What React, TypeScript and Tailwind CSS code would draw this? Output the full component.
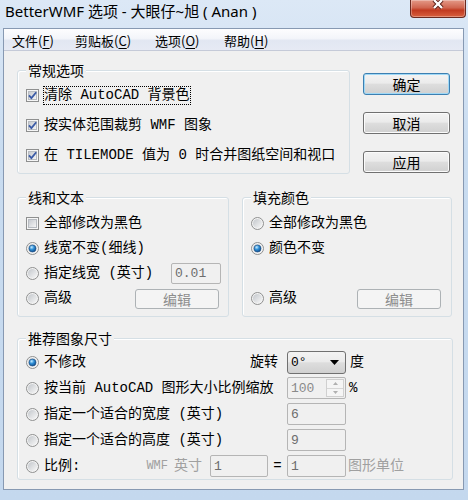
import type { ReactNode } from "react";

const FACE = "bg-[linear-gradient(#f3f3f3,#ebebeb_45%,#dddddd_52%,#d0d0d0)]";

function Check({ on }: { on?: boolean }) {
  return (
    <svg width="13" height="13" viewBox="0 0 13 13" className="shrink-0">
      <defs>
        <linearGradient id="cbg" x1="0" y1="0" x2="1" y2="1">
          <stop offset="0" stopColor="#c3c7cd" />
          <stop offset="1" stopColor="#f8f8f8" />
        </linearGradient>
      </defs>
      <rect x="0.5" y="0.5" width="12" height="12" fill="#f6f6f6" stroke="#8e8f8f" />
      <rect x="2.5" y="2.5" width="8" height="8" fill="url(#cbg)" stroke="#b7bbc1" />
      {on && <path d="M3 6.3 L5.4 9 L10.2 3.2" fill="none" stroke="#3a5aa6" strokeWidth="1.8" />}
    </svg>
  );
}

function Radio({ on }: { on?: boolean }) {
  return (
    <svg width="13" height="13" viewBox="0 0 13 13" className="shrink-0">
      <defs>
        <linearGradient id="rbg" x1="0" y1="0" x2="1" y2="1">
          <stop offset="0" stopColor="#c2c6cb" />
          <stop offset="1" stopColor="#f8f8f8" />
        </linearGradient>
        <radialGradient id="rdot" cx="0.38" cy="0.32" r="0.75">
          <stop offset="0" stopColor="#c6ecff" />
          <stop offset="0.45" stopColor="#2e8ed6" />
          <stop offset="1" stopColor="#0c4684" />
        </radialGradient>
      </defs>
      <circle cx="6.5" cy="6.5" r="6" fill="#f4f4f4" stroke="#8e8f8f" />
      <circle cx="6.5" cy="6.5" r="4.6" fill="url(#rbg)" />
      {on && <circle cx="6.5" cy="6.5" r="3.5" fill="url(#rdot)" stroke="#1a4a80" strokeWidth="0.6" />}
    </svg>
  );
}

function Group({ title, className, children }: { title: string; className: string; children: ReactNode }) {
  return (
    <div className={`rounded-[3px] border border-[#d5dfe5] shadow-[inset_1px_1px_0_#fff] ${className}`}>
      <div className="-mt-[9px] ml-[8px] w-fit bg-[#f0f0f0] px-[2px] font-['Noto_Sans_CJK_SC',sans-serif] leading-[16px]">
        {title}
      </div>
      {children}
    </div>
  );
}

function Field({ value, className }: { value: string; className: string }) {
  return (
    <div
      className={`flex items-center rounded-[2px] border border-[#b5b5b5] bg-[#f0f0f0] pl-[3px] text-[13px] leading-none text-[#6d6d6d] ${className}`}
    >
      {value}
    </div>
  );
}

function EditBtn() {
  return (
    <div className="flex h-[20px] w-[84px] items-center justify-center rounded-[3px] border border-[#adb2b5] bg-[#f4f4f4] font-['Noto_Sans_CJK_SC',sans-serif] leading-none text-[#8d8d8d]">
      编辑
    </div>
  );
}

function PushBtn({ label, isDefault }: { label: string; isDefault?: boolean }) {
  return (
    <button
      type="button"
      className={`flex h-[22px] w-[87px] items-center justify-center rounded-[3px] border ${FACE} font-['Noto_Sans_CJK_SC',sans-serif] text-[14px] leading-none ${
        isDefault
          ? "border-[#3c7fb1] shadow-[inset_0_0_0_1px_#9fd8f6]"
          : "border-[#707070] shadow-[inset_0_0_0_1px_#fbfbfb]"
      }`}
    >
      {label}
    </button>
  );
}

function MenuItem({ label, k, className }: { label: string; k: string; className: string }) {
  return (
    <div className={className}>
      {label}(<span className="underline underline-offset-2">{k}</span>)
    </div>
  );
}

export default function App() {
  return (
    <div className="h-[500px] w-[468px] overflow-hidden bg-[linear-gradient(#dce8f6,#c9dcf0_30%,#c4d8ee)] font-['Liberation_Mono','Noto_Sans_CJK_SC',monospace] text-[14px] text-black">
      {/* title bar */}
      <div className="flex h-[28px] items-start justify-between">
        <div className="pl-[5px] pt-[1px] font-['Noto_Sans','Noto_Sans_CJK_SC',sans-serif] text-[15px] leading-[20px]">
          BetterWMF 选项 - 大眼仔~旭 ( Anan )
        </div>
        <div className="mr-[2px] flex h-[18px] w-[56px] justify-center rounded-b-[4px] border border-t-0 border-[#6b2a20] bg-[linear-gradient(#e49a88,#d06650_45%,#c13a20_60%,#d8603f)] shadow-[inset_0_0_0_1px_rgba(255,255,255,0.3)]">
          <svg width="16" height="13" viewBox="0 0 16 13" className="-mt-[2px]">
            <path d="M4 2 L12 10 M12 2 L4 10" stroke="#5a1d14" strokeWidth="4.2" />
            <path d="M4 2 L12 10 M12 2 L4 10" stroke="#fff" strokeWidth="2.4" />
          </svg>
        </div>
      </div>

      {/* client */}
      <div className="ml-[3px] h-[462px] w-[461px] border border-[#8799b2] bg-[#f0f0f0]">
        {/* menu */}
        <div className="flex h-[22px] items-start border-b border-[#c5cad8] bg-[linear-gradient(#fdfdfe,#f3f5fa_45%,#e2e7f2_55%,#e6eaf4)] pl-[8px] pt-[4px] font-['Noto_Sans_CJK_SC',sans-serif] text-[13px] leading-[16px]">
          <MenuItem label="文件" k="F" className="w-[63px]" />
          <MenuItem label="剪贴板" k="C" className="w-[80px]" />
          <MenuItem label="选项" k="O" className="w-[69px]" />
          <MenuItem label="帮助" k="H" className="w-[60px]" />
        </div>

        <div className="pl-[13px]">
          {/* general options + buttons */}
          <div className="mt-[19px] flex items-start">
            <Group title="常规选项" className="w-[333px] pb-[3px]">
              <div className="mt-[2px]">
                <div className="flex h-[30px] items-center gap-[5px] pl-[8px]">
                  <Check on />
                  <span className="leading-[17px] outline-1 outline-dotted outline-black">清除 AutoCAD 背景色</span>
                </div>
                <div className="flex h-[30px] items-center gap-[5px] pl-[8px]">
                  <Check on />
                  <span>按实体范围裁剪 WMF 图象</span>
                </div>
                <div className="flex h-[30px] items-center gap-[5px] pl-[8px]">
                  <Check on />
                  <span>在 TILEMODE 值为 0 时合并图纸空间和视口</span>
                </div>
              </div>
            </Group>
            <div className="ml-[13px] mt-[3px] flex flex-col gap-[17px]">
              <PushBtn label="确定" isDefault />
              <PushBtn label="取消" />
              <PushBtn label="应用" />
            </div>
          </div>

          {/* line/text + fill */}
          <div className="mt-[23px] flex gap-[13px]">
            <Group title="线和文本" className="w-[212px] pb-[5px]">
              <div className="mt-[6px]">
                <div className="flex h-[25px] items-center gap-[5px] pl-[8px]">
                  <Check />
                  <span>全部修改为黑色</span>
                </div>
                <div className="flex h-[25px] items-center gap-[5px] pl-[8px]">
                  <Radio on />
                  <span>线宽不变(细线)</span>
                </div>
                <div className="flex h-[25px] items-center pl-[8px] pr-[7px]">
                  <Radio />
                  <span className="ml-[5px]">指定线宽 (英寸)</span>
                  <Field value="0.01" className="ml-auto h-[21px] w-[50px]" />
                </div>
                <div className="flex h-[25px] items-center pl-[8px] pr-[9px]">
                  <Radio />
                  <span className="ml-[5px]">高级</span>
                  <div className="ml-auto">
                    <EditBtn />
                  </div>
                </div>
              </div>
            </Group>
            <Group title="填充颜色" className="w-[210px] pb-[5px]">
              <div className="mt-[6px]">
                <div className="flex h-[25px] items-center gap-[5px] pl-[8px]">
                  <Radio />
                  <span>全部修改为黑色</span>
                </div>
                <div className="flex h-[25px] items-center gap-[5px] pl-[8px]">
                  <Radio on />
                  <span>颜色不变</span>
                </div>
                <div className="h-[25px]" />
                <div className="flex h-[25px] items-center pl-[8px] pr-[10px]">
                  <Radio />
                  <span className="ml-[5px]">高级</span>
                  <div className="ml-auto">
                    <EditBtn />
                  </div>
                </div>
              </div>
            </Group>
          </div>

          {/* recommended size */}
          <Group title="推荐图象尺寸" className="mt-[21px] w-[436px]">
            <div className="mt-[3px]">
              <div className="flex h-[26px] items-center">
                <div className="flex w-[269px] items-center pl-[8px]">
                  <Radio on />
                  <span className="ml-[5px]">不修改</span>
                  <span className="ml-auto mr-[9px]">旋转</span>
                </div>
                <div className={`flex h-[23px] w-[59px] items-center justify-between rounded-[3px] border border-[#707070] ${FACE} pl-[3px] pr-[6px] text-[13px] leading-none`}>
                  <span>0°</span>
                  <svg width="9" height="5" viewBox="0 0 9 5">
                    <path d="M0 0 H9 L4.5 5 Z" fill="#000" />
                  </svg>
                </div>
                <span className="ml-[4px]">度</span>
              </div>

              <div className="flex h-[26px] items-center">
                <div className="flex w-[269px] items-center pl-[8px]">
                  <Radio />
                  <span className="ml-[5px] whitespace-nowrap">按当前 AutoCAD 图形大小比例缩放</span>
                </div>
                <div className="flex h-[22px] w-[59px] items-center rounded-[2px] border border-[#b5b5b5] bg-[#f0f0f0] pl-[3px] pr-[1px] text-[13px] leading-none text-[#8a8a8a]">
                  <span className="flex-1">100</span>
                  <div className="flex h-[18px] w-[18px] flex-col border border-[#d0d0d0] bg-[#f5f5f5]">
                    <div className="flex flex-1 items-center justify-center border-b border-[#d6d6d6]">
                      <svg width="5" height="3" viewBox="0 0 5 3">
                        <path d="M0 3 L2.5 0 L5 3 Z" fill="#b0b0b0" />
                      </svg>
                    </div>
                    <div className="flex flex-1 items-center justify-center">
                      <svg width="5" height="3" viewBox="0 0 5 3">
                        <path d="M0 0 L5 0 L2.5 3 Z" fill="#b0b0b0" />
                      </svg>
                    </div>
                  </div>
                </div>
                <span className="ml-[3px]">%</span>
              </div>

              <div className="flex h-[26px] items-center">
                <div className="flex w-[269px] items-center pl-[8px]">
                  <Radio />
                  <span className="ml-[5px]">指定一个适合的宽度 (英寸)</span>
                </div>
                <Field value="6" className="h-[22px] w-[59px]" />
              </div>

              <div className="flex h-[26px] items-center">
                <div className="flex w-[269px] items-center pl-[8px]">
                  <Radio />
                  <span className="ml-[5px]">指定一个适合的高度 (英寸)</span>
                </div>
                <Field value="9" className="h-[22px] w-[59px]" />
              </div>

              <div className="flex h-[26px] items-center">
                <div className="flex w-[269px] items-center pl-[8px]">
                  <Radio />
                  <span className="ml-[5px]">比例:</span>
                  <span className="ml-auto text-[12px] text-[#a0a0a0]">WMF</span>
                  <span className="ml-[6px] text-[#a0a0a0]">英寸</span>
                  <Field value="1" className="ml-[8px] h-[22px] w-[58px]" />
                  <span className="w-[19px] text-center">=</span>
                </div>
                <Field value="1" className="h-[22px] w-[59px]" />
                <span className="ml-[2px] text-[#a0a0a0]">图形单位</span>
              </div>
            </div>
          </Group>
        </div>
      </div>
    </div>
  );
}
